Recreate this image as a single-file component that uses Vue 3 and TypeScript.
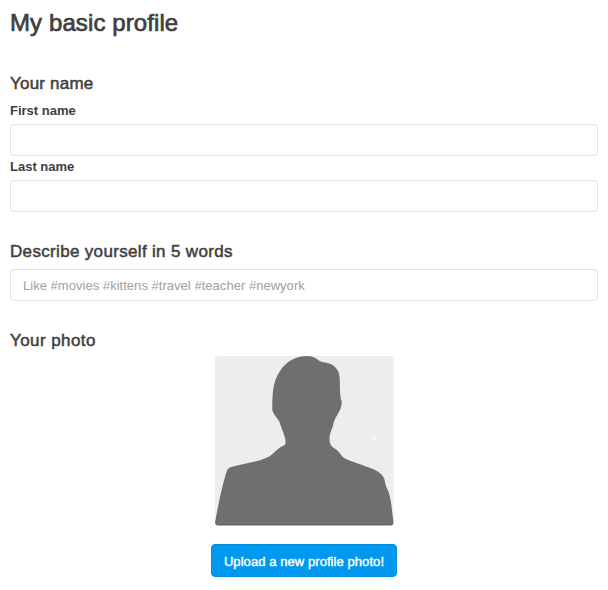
<script setup lang="ts">
import { ref } from 'vue'

const firstName = ref('')
const lastName = ref('')
const words = ref('')
</script>

<template>
  <form class="profile" @submit.prevent>
    <h1>My basic profile</h1>

    <section class="names">
      <h2>Your name</h2>
      <label for="first">First name</label>
      <input id="first" v-model="firstName" type="text" />
      <label for="last">Last name</label>
      <input id="last" v-model="lastName" type="text" />
    </section>

    <section class="words">
      <h2>Describe yourself in 5 words</h2>
      <input
        v-model="words"
        type="text"
        placeholder="Like #movies #kittens #travel #teacher #newyork"
      />
    </section>

    <section class="photo">
      <h2>Your photo</h2>
      <svg class="avatar" viewBox="215 356 178 170">
        <rect x="215" y="356" width="178.500" height="169.500" rx="3" fill="#ededed" />
        <path
          d="M307 356 C299 356 292 359 287 363 C281 368 277 375 274.500 383 C272.500 390 272.200 401 272.300 410 C273 413 276 417 279 421 C282 429 284 434 285.300 439 C285.700 443 285.600 444.500 284.500 445 C282 446.500 280.500 446.800 278 449 C274 452 272 455.500 267 457.500 C256 462.500 241 464 230.500 467.300 C227.500 468.300 227 470.500 226 473.500 C221.500 488 218.500 504 215.300 521 Q214.500 525.500 218 525.500 H391 Q393.700 525.500 393.500 522 C392 512 391.500 500 388.500 492 C387 488 385.500 486 384.800 481 C384.200 475.500 379 471.500 373 469 C363 465 352 462 345 458.500 C341 456 339 451 335.500 449 C332 447 330.500 445.500 329.700 441.500 C328.800 437 330.500 432 333 426 C334 419 337.500 415 340 410 C341.500 406 342.200 402.500 341.300 400 C340.300 398 340.700 397 340.200 394 C339.600 384 340.500 376 338 371 C335.500 366 331 363.500 325 362.500 C318 361.500 318 359 313 357 C311 356.200 309 356 307 356Z"
          fill="#6f6f6f"
        />
        <path d="M218 524.500 H391" stroke="#656565" fill="none" />
        <path d="M371.500 439 Q375 436 379 439Z" fill="#fff" />
      </svg>
      <button type="button">Upload a new profile photo!</button>
    </section>
  </form>
</template>

<style>
body {
  background: #fff;
}
</style>

<style scoped>
.profile {
  box-sizing: border-box;
  height: 590px;
  padding: 8px 10px 0;
  color: #404040;
  font-family: 'Liberation Sans', Arial, sans-serif;
}

h1,
h2 {
  margin: 0;
  font-weight: 400;
  white-space: nowrap;
}

h1 {
  height: 66px;
  font-size: 24px;
  line-height: 30px;
  letter-spacing: 0.1px;
  -webkit-text-stroke: 0.7px #404040;
}

h2 {
  height: 27px;
  font-size: 17px;
  line-height: 20px;
  letter-spacing: 0.33px;
  -webkit-text-stroke: 0.5px #404040;
}

.names h2 {
  letter-spacing: 0.2px;
}

label {
  display: block;
  height: 23px;
  font-size: 13px;
  font-weight: 700;
  line-height: 20px;
}

input {
  display: block;
  box-sizing: border-box;
  width: 100%;
  height: 32px;
  margin: 0;
  padding: 0 12px;
  border: 1px solid #e0e0e0;
  border-radius: 4px;
  outline: 0;
  background: #fff;
  color: #404040;
  font: 13px 'Liberation Sans', Arial, sans-serif;
}

input::placeholder {
  color: #a0a0a0;
  opacity: 1;
  letter-spacing: 0.03px;
}

input + label {
  height: 24px;
  line-height: 22px;
}

.words {
  margin-top: 30px;
}

.photo {
  display: flex;
  flex-direction: column;
  align-items: center;
  margin-top: 30px;
}

.photo h2 {
  align-self: flex-start;
  height: 25px;
  letter-spacing: 0.42px;
}

.avatar {
  display: block;
  width: 178px;
  height: 170px;
  overflow: visible;
}

button {
  width: 186px;
  height: 33px;
  margin: 18px 0 0;
  padding: 1px 0 0;
  border: 1px solid #008de0;
  border-radius: 4px;
  background: #0099ef;
  color: #fff;
  font: 13px 'Liberation Sans', Arial, sans-serif;
  letter-spacing: 0.07px;
  white-space: nowrap;
  -webkit-text-stroke: 0.4px #fff;
}
</style>
